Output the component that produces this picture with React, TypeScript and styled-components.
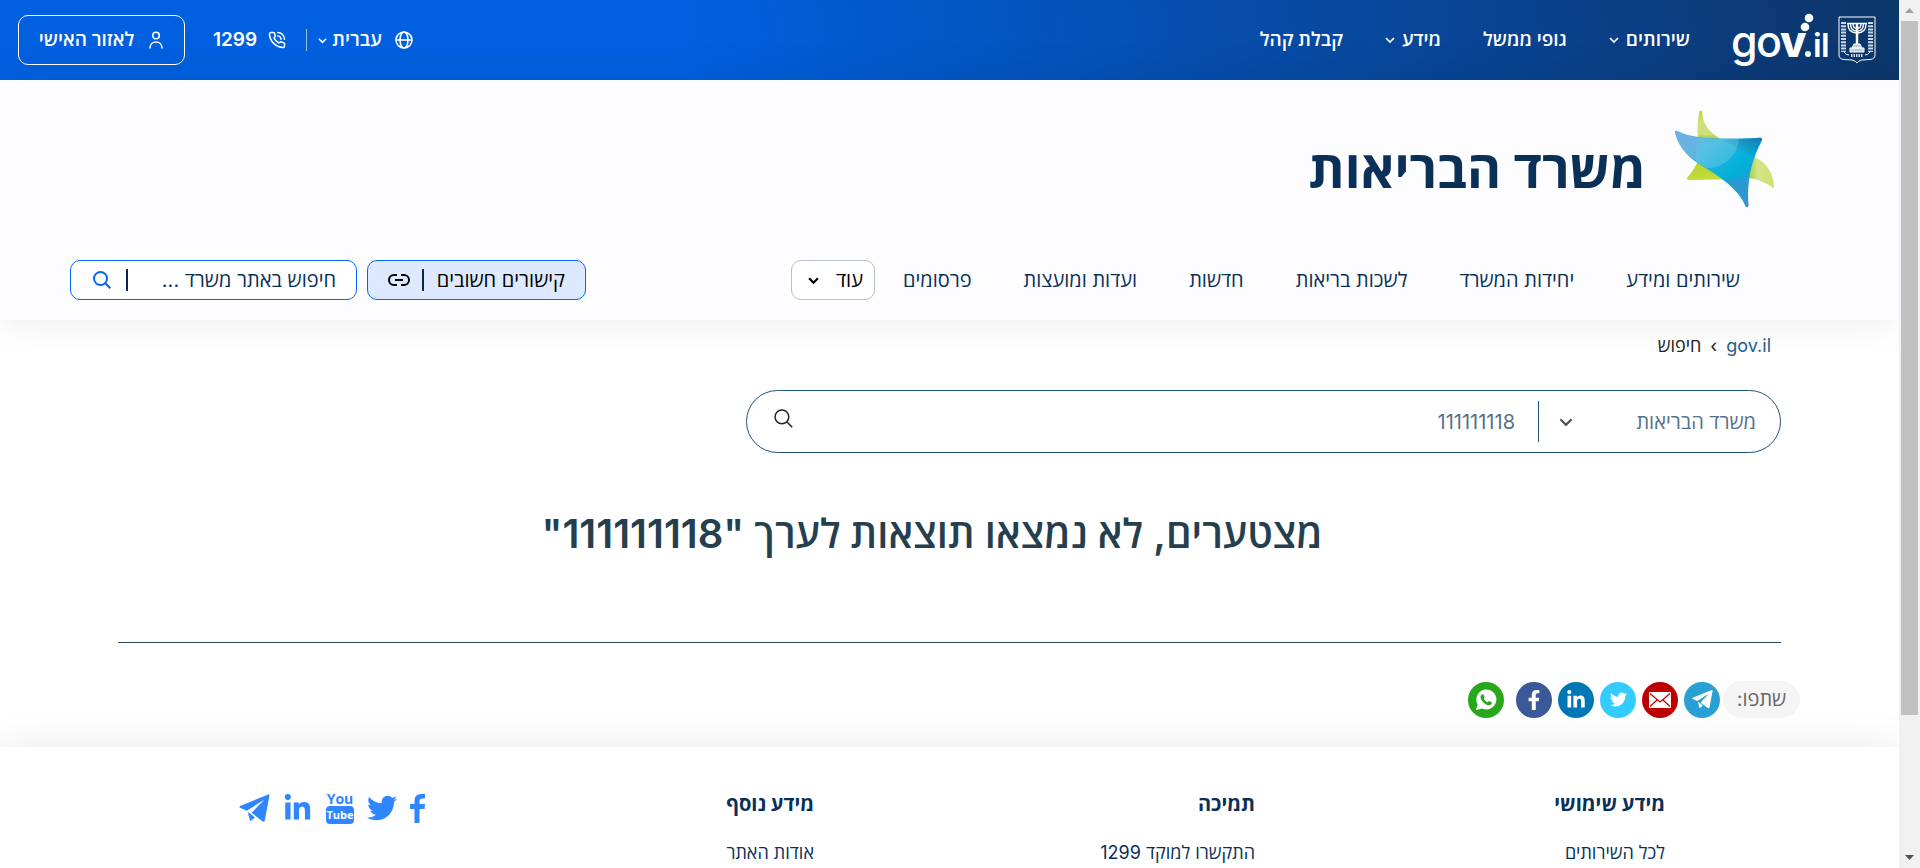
import React from "react";
import styled, { createGlobalStyle, css } from "styled-components";
import { FaFacebookF, FaLinkedinIn, FaTwitter } from "react-icons/fa";

const GlobalStyle = createGlobalStyle`
  *, *::before, *::after { box-sizing: border-box; }
  body { margin: 0; background: #fff; font-family: Inter, "Open Sans", sans-serif; font-size: 18px; line-height: 24px; color: #0b3057; }
  h1, h2, p, ul { margin: 0; padding: 0; }
  ul { list-style: none; }
  a { color: inherit; text-decoration: none; }
  button, input, select { font: inherit; color: inherit; }
  button { cursor: pointer; white-space: nowrap; }
  svg { display: block; flex: none; direction: ltr; }
`;

/* ---------- shell ---------- */

const Shell = styled.div`
  display: flex;
  flex-direction: row;
  direction: ltr;
  height: 100vh;
  overflow: hidden;
`;

const Page = styled.div`
  direction: rtl;
  flex: 1;
  min-width: 0;
  overflow: hidden;
`;

const ScrollTrack = styled.div`
  display: flex;
  flex-direction: column;
  width: 21px;
  padding: 0 2px;
  background: #f1f1f1;
`;

const ScrollArrow = styled.div<{ $down?: boolean }>`
  flex: none;
  height: 21px;
  display: grid;
  place-items: center;
  color: ${(p) => (p.$down ? "#505050" : "#a3a3a3")};
`;

const ScrollLane = styled.div`
  flex: 1;
`;

const ScrollThumb = styled.div`
  height: 84%;
  background: #c1c1c1;
`;

/* ---------- government bar ---------- */

const TopBar = styled.header`
  display: flex;
  align-items: center;
  height: 80px;
  padding: 0 23px 0 18px;
  color: #fff;
  font-size: 19px;
  font-weight: 600;
  background: linear-gradient(260deg, #0b3668 0%, #0b3d80 12%, #0060df 64%);
`;

const BrandLink = styled.a`
  display: flex;
  align-items: center;
  gap: 8px;
`;

const TopNav = styled.nav`
  display: flex;
  gap: 42px;
  margin-right: 42px;
`;

const TopLink = styled.a`
  display: flex;
  align-items: center;
  gap: 7px;
`;

const TopTools = styled.div`
  display: flex;
  align-items: center;
  margin-right: auto;
`;

const ToolButton = styled.button`
  display: flex;
  align-items: center;
  gap: 5px;
  padding: 0;
  border: 0;
  background: none;
`;

const ToolLabel = styled.span`
  margin-right: 8px;
`;

const ToolDivider = styled.span`
  width: 1px;
  height: 22px;
  margin: 0 11px 0 20px;
  background: rgba(255, 255, 255, 0.6);
`;

const PhoneLink = styled.a`
  display: flex;
  align-items: center;
  gap: 11px;
  margin-left: 28px;
`;

const AccountLink = styled.a`
  display: flex;
  align-items: center;
  justify-content: center;
  gap: 14px;
  width: 167px;
  height: 50px;
  border: 1px solid #fff;
  border-radius: 10px;
`;

/* ---------- ministry band ---------- */

const Band = styled.section`
  position: relative;
  padding: 30px 0 20px 70px;
  background: #fdfdff;
  box-shadow: 0 0 40px rgba(0, 0, 0, 0.09);
`;

const Ministry = styled.div`
  display: flex;
  align-items: flex-end;
  gap: 28px;
  padding-right: 124px;
`;

const MinistryName = styled.h1`
  padding-bottom: 6px;
  font-size: 52px;
  font-weight: 700;
  line-height: 64px;
`;

const BandRow = styled.div`
  display: flex;
  align-items: center;
  margin-top: 52px;
  padding-right: 159px;
`;

const BandNav = styled.nav`
  display: flex;
  gap: 52px;
  font-size: 20px;
`;

const boxed = css`
  display: flex;
  align-items: center;
  height: 40px;
  border: 1px solid #0068f5;
  border-radius: 10px;
  background: #fff;
`;

const MoreButton = styled.button`
  ${boxed}
  gap: 17px;
  width: 84px;
  margin-right: 28px;
  padding: 0 11px;
  border-color: #b8bfd0;
  font-size: 20px;
  color: #000;
`;

const BandActions = styled.div`
  display: flex;
  gap: 10px;
  margin-right: auto;
`;

const LinksButton = styled.button`
  ${boxed}
  justify-content: space-between;
  width: 219px;
  padding: 0 20px;
  background: #dce9ff;
  font-size: 20px;
  color: #000;
`;

const SiteSearch = styled.form`
  ${boxed}
  gap: 15px;
  width: 287px;
  padding: 0 20px 0 22px;
  font-size: 20px;
`;

const SiteSearchInput = styled.input`
  flex: 1;
  min-width: 0;
  padding: 0;
  border: 0;
  outline: 0;
  background: none;
  &::placeholder { color: #0b3057; opacity: 1; }
`;

const Bar = styled.span`
  width: 2px;
  height: 22px;
  background: #0b2350;
`;

const IconButton = styled.button`
  display: grid;
  place-items: center;
  padding: 0;
  border: 0;
  background: none;
`;

const SearchIconButton = styled(IconButton)`
  color: #0068f5;
`;

/* ---------- results ---------- */

const Main = styled.main`
  padding: 14px 118px 29px;
`;

const Crumbs = styled.nav`
  display: flex;
  gap: 9px;
  padding-right: 10px;
  color: #222;
`;

const CrumbLink = styled.a`
  color: #26608a;
`;

const SearchForm = styled.form`
  display: flex;
  align-items: center;
  width: 62.25%;
  height: 63px;
  margin-top: 32px;
  padding: 0 24px 0 27px;
  border: 1px solid #1f5378;
  border-radius: 32px;
  font-size: 20px;
  color: #56718a;
`;

const OfficePicker = styled.label`
  position: relative;
  display: flex;
  align-items: center;
  width: 218px;
  height: 41px;
  border-left: 1px solid #1f5378;
`;

const OfficeSelect = styled.select`
  appearance: none;
  width: 100%;
  padding: 0;
  border: 0;
  outline: 0;
  background: none;
`;

const PickerArrow = styled.span`
  position: absolute;
  left: 20px;
  color: #555;
  pointer-events: none;
`;

const QueryInput = styled.input`
  flex: 1;
  min-width: 0;
  padding: 0 23px;
  border: 0;
  outline: 0;
  background: none;
`;

const SubmitButton = styled(IconButton)`
  padding-bottom: 6px;
  color: #222;
`;

const NoResults = styled.h2`
  margin-top: 53px;
  padding-right: 35px;
  font-size: 40px;
  font-weight: 600;
  line-height: 56px;
  text-align: center;
  color: #263f4f;
`;

const Rule = styled.hr`
  margin: 80px 0 38px;
  border: 0;
  border-top: 1px solid #264a60;
`;

const Share = styled.div`
  display: flex;
  align-items: center;
  gap: 6px;
  margin-right: -19px;
`;

const ShareLabel = styled.span`
  width: 77px;
  margin-left: -3px;
  border-radius: 19px;
  background: #f5f5f5;
  font-size: 20px;
  line-height: 37px;
  text-align: center;
  color: #666;
`;

const ShareLink = styled.a<{ $color: string; $apart?: boolean }>`
  display: grid;
  place-items: center;
  width: 36px;
  height: 36px;
  margin-right: ${(p) => (p.$apart ? 6 : 0)}px;
  border-radius: 50%;
  background: ${(p) => p.$color};
  color: #fff;
`;

/* ---------- footer ---------- */

const Footer = styled.footer`
  display: grid;
  grid-template-columns: 410fr 441fr 389fr 186fr;
  padding: 44px 234px 40px 239px;
  background: #fff;
  box-shadow: 0 0 40px rgba(0, 0, 0, 0.09);
`;

const FooterTitle = styled.h2`
  margin-bottom: 24px;
  font-size: 20px;
  font-weight: 700;
  line-height: 26px;
`;

const Social = styled.div`
  display: flex;
  align-items: center;
  justify-content: space-between;
  height: 34px;
  color: #3086ff;
`;

/* ---------- drawings ---------- */

const Chevron = ({ size = 10, weight = 1.7 }: { size?: number; weight?: number }) => (
  <svg width={size} height={size} viewBox="0 0 10 10" fill="none" stroke="currentColor" strokeWidth={weight}>
    <path d="M1 3 L5 7 L9 3" />
  </svg>
);

const GovLogo = () => (
  <svg width="98" height="62" viewBox="0 0 98 62" fill="#fff" fontFamily="Inter, sans-serif" aria-label="gov.il">
    <text x="-1" y="48" fontSize="43" fontWeight="500">g</text>
    <text x="24" y="48" fontSize="43" fontWeight="500">o</text>
    <text x="48" y="48" fontSize="43" fontWeight="800">v</text>
    <text x="81" y="48" fontSize="33" fontWeight="600">i</text>
    <text x="89" y="48" fontSize="33" fontWeight="600">l</text>
    <circle cx="76" cy="45" r="3" />
    <circle cx="73" cy="18" r="4.3" />
    <circle cx="77" cy="9" r="4.3" />
  </svg>
);

const Emblem = () => (
  <svg width="38" height="48" viewBox="0 0 38 48" fill="none" stroke="#fff" strokeWidth="1">
    <path d="M1 1 H37 V39 Q37 43 32 43.500 L24 44 Q20 45 19 47 Q18 45 14 44 L6 43.500 Q1 43 1 39 Z" />
    <path d="M10 8 Q10 17 19 17 Q28 17 28 8 M12.500 8 Q12.500 15 19 15 Q25.500 15 25.500 8 M15 8 Q15 12.500 19 12.500 Q23 12.500 23 8 M9 7.500 H29" strokeWidth="1.400" />
    <path d="M19 7 V28" strokeWidth="2.500" />
    <path d="M16 28 H22 L24 32 H14 Z M12 32 H26 V36 H12 Z" fill="#fff" fillOpacity=".75" />
    <path d="M5.500 6 V36 M32.500 6 V36" strokeWidth="5" strokeDasharray="2 1.200" opacity=".8" />
    <path d="M6 36 Q8 39 11 39 M32 36 Q30 39 27 39" />
    <path d="M13 39.500 H25" strokeWidth="3" strokeDasharray="1.500 1" opacity=".8" />
  </svg>
);

const HealthLogo = () => (
  <svg width="101" height="98" viewBox="106 328 302 294">
    <defs>
      <linearGradient id="leaf" x1="0" y1="0" x2="0" y2="1">
        <stop offset="0" stopColor="#bcd530" />
        <stop offset=".16" stopColor="#cfe07a" />
        <stop offset=".34" stopColor="#cfe07a" />
        <stop offset=".42" stopColor="#9fc040" />
        <stop offset=".7" stopColor="#b4d02c" />
        <stop offset="1" stopColor="#c5dc3c" />
      </linearGradient>
      <linearGradient id="leafTip" x1="0" y1="0" x2="1" y2="0">
        <stop offset="0" stopColor="#a9c94a" />
        <stop offset=".35" stopColor="#d4e588" />
        <stop offset="1" stopColor="#cfe070" />
      </linearGradient>
      <linearGradient id="sea" x1="0" y1="0" x2="1" y2="1">
        <stop offset="0" stopColor="#5aa5dc" />
        <stop offset=".3" stopColor="#35b4de" />
        <stop offset=".6" stopColor="#00b0d8" />
        <stop offset="1" stopColor="#3f93cc" />
      </linearGradient>
      <linearGradient id="deep" x1="0" y1="1" x2="1" y2="0">
        <stop offset=".3" stopColor="#1578b4" stopOpacity="0" />
        <stop offset="1" stopColor="#1578b4" />
      </linearGradient>
    </defs>
    <path d="M181 334 Q186 326 190 333 C190 378 225 402 248 416 L345 468 L332 533 Q240 538 148 538 Q142 536 146 529 Q168 505 177 480 V410 Q174 370 181 334 Z" fill="url(#leaf)" />
    <path d="M345 468 C385 485 405 520 405 559 Q404 564 400 560 C380 545 350 535 330 533 Z" fill="url(#leafTip)" />
    <path d="M109 396 Q107 389 114 390 C160 414 230 417 365 411 Q372 413 369 419 C338 480 322 545 329 615 Q326 624 320 617 C300 560 225 518 172 484 C140 462 116 430 109 396 Z" fill="url(#sea)" />
    <path d="M248 417 L365 411 Q372 413 369 419 Q355 445 346 468 Z" fill="url(#deep)" />
    <path d="M177 411 Q240 417 300 414 C298 465 250 505 203 502 L172 484 Z" fill="#fff" opacity=".16" />
    <path d="M109 396 Q107 389 114 390 Q145 406 177 411 V482 C140 462 116 430 109 396 Z" fill="#7fb8e4" opacity=".6" />
    <path d="M254 534 L331 532 Q326 570 329 615 Q326 624 320 617 Q304 570 254 534 Z" fill="#3c90cb" opacity=".55" />
  </svg>
);

const Globe = () => (
  <svg width="18" height="18" viewBox="0 0 18 18" fill="none" stroke="currentColor" strokeWidth="1.600">
    <circle cx="9" cy="9" r="8" />
    <ellipse cx="9" cy="9" rx="4" ry="8" />
    <path d="M1 9 H17" />
  </svg>
);

const PhoneIcon = () => (
  <svg width="18" height="18" viewBox="0 0 24 24" fill="none" stroke="currentColor" strokeWidth="2" strokeLinejoin="round" strokeLinecap="round">
    <path d="M22 17v3a2 2 0 0 1-2.200 2A19 19 0 0 1 2 4.200 2 2 0 0 1 4 2h3a2 2 0 0 1 2 1.700c.2 1.200.5 2.200.9 3.200L8 9.500a16 16 0 0 0 6.500 6.500l2-1.700c1 .4 2.200.7 3.500.9A2 2 0 0 1 22 17Z" />
    <path d="M13 2a9 9 0 0 1 9 9M13 6.500a5 5 0 0 1 4.500 4.500" />
  </svg>
);

const PersonIcon = () => (
  <svg width="16" height="18" viewBox="0 0 16 18" fill="none" stroke="currentColor" strokeWidth="1.600" strokeLinecap="round">
    <circle cx="8" cy="4.500" r="3.300" />
    <path d="M2 17 C2 9 14 9 14 17" />
  </svg>
);

const LinkIcon = () => (
  <svg width="22" height="14" viewBox="0 0 22 14" fill="none" stroke="currentColor" strokeWidth="2">
    <path d="M9 2 H6 A5 5 0 0 0 6 12 H9 M13 2 H16 A5 5 0 0 1 16 12 H13 M7 7 H15" />
  </svg>
);

const Magnifier = ({ weight = 1.6, size = 18 }: { weight?: number; size?: number }) => (
  <svg width={size} height={size} viewBox="0 0 18 18" fill="none" stroke="currentColor" strokeWidth={weight}>
    <circle cx="7.500" cy="7.500" r="6.500" />
    <path d="M12 12 L17.300 17.300" />
  </svg>
);

const PaperPlane = ({ size }: { size: number }) => (
  <svg width={size} height={size} viewBox="0 0 32 30" fill="currentColor">
    <path d="M31.500 1.200 Q31.500 0 30 .5 L1 12.500 Q0 13.500 1 14.300 L8 17.200 L26 6 L13 19.500 L24.500 28.500 Q26 29.200 26.600 27.500 Z" />
    <path d="M9 18.500 L11.200 27 Q12 28.200 13 27 L16.500 24.200 L11.500 20.200 Z" />
  </svg>
);

const Envelope = () => (
  <svg width="22" height="16" viewBox="0 0 22 16">
    <rect width="22" height="16" rx="1" fill="#fff" />
    <path d="M1 1.500 L11 10 L21 1.500 M1 14.500 L8 8 M21 14.500 L14 8" fill="none" stroke="#bc0000" strokeWidth="1.200" />
  </svg>
);

const WhatsApp = () => (
  <svg width="22" height="22" viewBox="0 0 22 22">
    <path d="M11.500 .5 A10 10 0 1 1 7 19.500 L.8 21.300 L2.700 15.500 A10 10 0 0 1 11.500 .5 Z" fill="#fff" />
    <path d="M7 5.500 C7.800 5 8.500 5.300 8.800 6 L9.500 7.800 C9.700 8.500 8.700 9.200 8.700 9.600 C9.500 11.300 10.800 12.400 12.500 13.200 C13 13.300 13.700 12 14.300 12.100 L16.500 13.200 C17.300 13.600 16.800 15.200 15.800 15.800 C14 16.800 11.500 16 9 13.900 C6.500 11.700 5.200 9.400 5.600 7.300 C5.800 6.500 6.300 5.800 7 5.500 Z" fill="#29a71a" />
  </svg>
);

const YouTube = () => (
  <svg width="30" height="34" viewBox="0 0 30 34" fontFamily='"Open Sans", sans-serif' fontWeight="700" textAnchor="middle">
    <text x="15" y="13" fontSize="14" fill="#3086ff">You</text>
    <rect x="1" y="15" width="28" height="18" rx="4" fill="#3086ff" />
    <text x="15" y="28" fontSize="11" fill="#fff">Tube</text>
  </svg>
);

const Facebook = () => (
  <svg width="15" height="29" viewBox="0 0 15 29" fill="currentColor">
    <path d="M4.500 29 V15 H0 V10 H4.500 V7 Q4.500 0 11 0 H15 V4.500 H12 Q9.500 4.500 9.500 7 V10 H15 L14.500 15 H9.500 V29 Z" />
  </svg>
);

/* ---------- content ---------- */

const topLinks = [
  { text: "שירותים", menu: true },
  { text: "גופי ממשל", menu: false },
  { text: "מידע", menu: true },
  { text: "קבלת קהל", menu: false },
];

const bandLinks = ["שירותים ומידע", "יחידות המשרד", "לשכות בריאות", "חדשות", "ועדות ומועצות", "פרסומים"];

const footerColumns = [
  { title: "מידע שימושי", link: "לכל השירותים" },
  { title: "תמיכה", link: "התקשרו למוקד 1299" },
  { title: "מידע נוסף", link: "אודות האתר" },
];

export default function App() {
  return (
    <Shell>
      <GlobalStyle />
      <Page dir="rtl" lang="he">
        <TopBar>
          <BrandLink href="#">
            <Emblem />
            <GovLogo />
          </BrandLink>
          <TopNav>
            {topLinks.map((l) => (
              <TopLink href="#" key={l.text}>
                {l.text}
                {l.menu && <Chevron />}
              </TopLink>
            ))}
          </TopNav>
          <TopTools>
            <ToolButton type="button">
              <Globe />
              <ToolLabel>עברית</ToolLabel>
              <Chevron size={9} />
            </ToolButton>
            <ToolDivider />
            <PhoneLink href="#">
              <PhoneIcon />
              1299
            </PhoneLink>
            <AccountLink href="#">
              <PersonIcon />
              לאזור האישי
            </AccountLink>
          </TopTools>
        </TopBar>

        <Band>
          <Ministry>
            <HealthLogo />
            <MinistryName>משרד הבריאות</MinistryName>
          </Ministry>
          <BandRow>
            <BandNav>
              {bandLinks.map((t) => (
                <a href="#" key={t}>{t}</a>
              ))}
            </BandNav>
            <MoreButton type="button">
              עוד
              <Chevron size={11} weight={2} />
            </MoreButton>
            <BandActions>
              <LinksButton type="button">
                קישורים חשובים
                <Bar />
                <LinkIcon />
              </LinksButton>
              <SiteSearch>
                <SiteSearchInput aria-label="חיפוש באתר" placeholder="חיפוש באתר משרד ..." />
                <Bar />
                <SearchIconButton type="button" aria-label="חיפוש">
                  <Magnifier weight={2} />
                </SearchIconButton>
              </SiteSearch>
            </BandActions>
          </BandRow>
        </Band>

        <Main>
          <Crumbs>
            <CrumbLink href="#">gov.il</CrumbLink>
            <span>›</span>
            <span>חיפוש</span>
          </Crumbs>
          <SearchForm>
            <OfficePicker>
              <OfficeSelect aria-label="משרד" defaultValue="health">
                <option value="health">משרד הבריאות</option>
              </OfficeSelect>
              <PickerArrow>
                <Chevron size={14} weight={1.6} />
              </PickerArrow>
            </OfficePicker>
            <QueryInput aria-label="חיפוש" defaultValue="111111118" />
            <SubmitButton type="button" aria-label="חיפוש">
              <Magnifier size={19} weight={1.4} />
            </SubmitButton>
          </SearchForm>
          <NoResults>מצטערים, לא נמצאו תוצאות לערך "111111118"</NoResults>
          <Rule />
          <Share>
            <ShareLabel>שתפו:</ShareLabel>
            <ShareLink href="#" aria-label="Telegram" $color="#289fd5"><PaperPlane size={21} /></ShareLink>
            <ShareLink href="#" aria-label="Email" $color="#bc0000"><Envelope /></ShareLink>
            <ShareLink href="#" aria-label="Twitter" $color="#33ccff"><FaTwitter size={17} /></ShareLink>
            <ShareLink href="#" aria-label="LinkedIn" $color="#0077b5"><FaLinkedinIn size={20} /></ShareLink>
            <ShareLink href="#" aria-label="Facebook" $color="#3b5999"><FaFacebookF size={20} /></ShareLink>
            <ShareLink href="#" aria-label="WhatsApp" $color="#29a71a" $apart><WhatsApp /></ShareLink>
          </Share>
        </Main>

        <Footer>
          {footerColumns.map((c) => (
            <div key={c.title}>
              <FooterTitle>{c.title}</FooterTitle>
              <a href="#">{c.link}</a>
            </div>
          ))}
          <Social>
            <a href="#" aria-label="Facebook"><Facebook /></a>
            <a href="#" aria-label="Twitter"><FaTwitter size={30} /></a>
            <a href="#" aria-label="YouTube"><YouTube /></a>
            <a href="#" aria-label="LinkedIn"><FaLinkedinIn size={29} /></a>
            <a href="#" aria-label="Telegram"><PaperPlane size={31} /></a>
          </Social>
        </Footer>
      </Page>
      <ScrollTrack aria-hidden="true">
        <ScrollArrow>
          <svg width="9" height="5" viewBox="0 0 9 5" fill="currentColor"><path d="M0 5 L4.500 0 L9 5 Z" /></svg>
        </ScrollArrow>
        <ScrollLane>
          <ScrollThumb />
        </ScrollLane>
        <ScrollArrow $down>
          <svg width="9" height="5" viewBox="0 0 9 5" fill="currentColor"><path d="M0 0 L4.500 5 L9 0 Z" /></svg>
        </ScrollArrow>
      </ScrollTrack>
    </Shell>
  );
}
